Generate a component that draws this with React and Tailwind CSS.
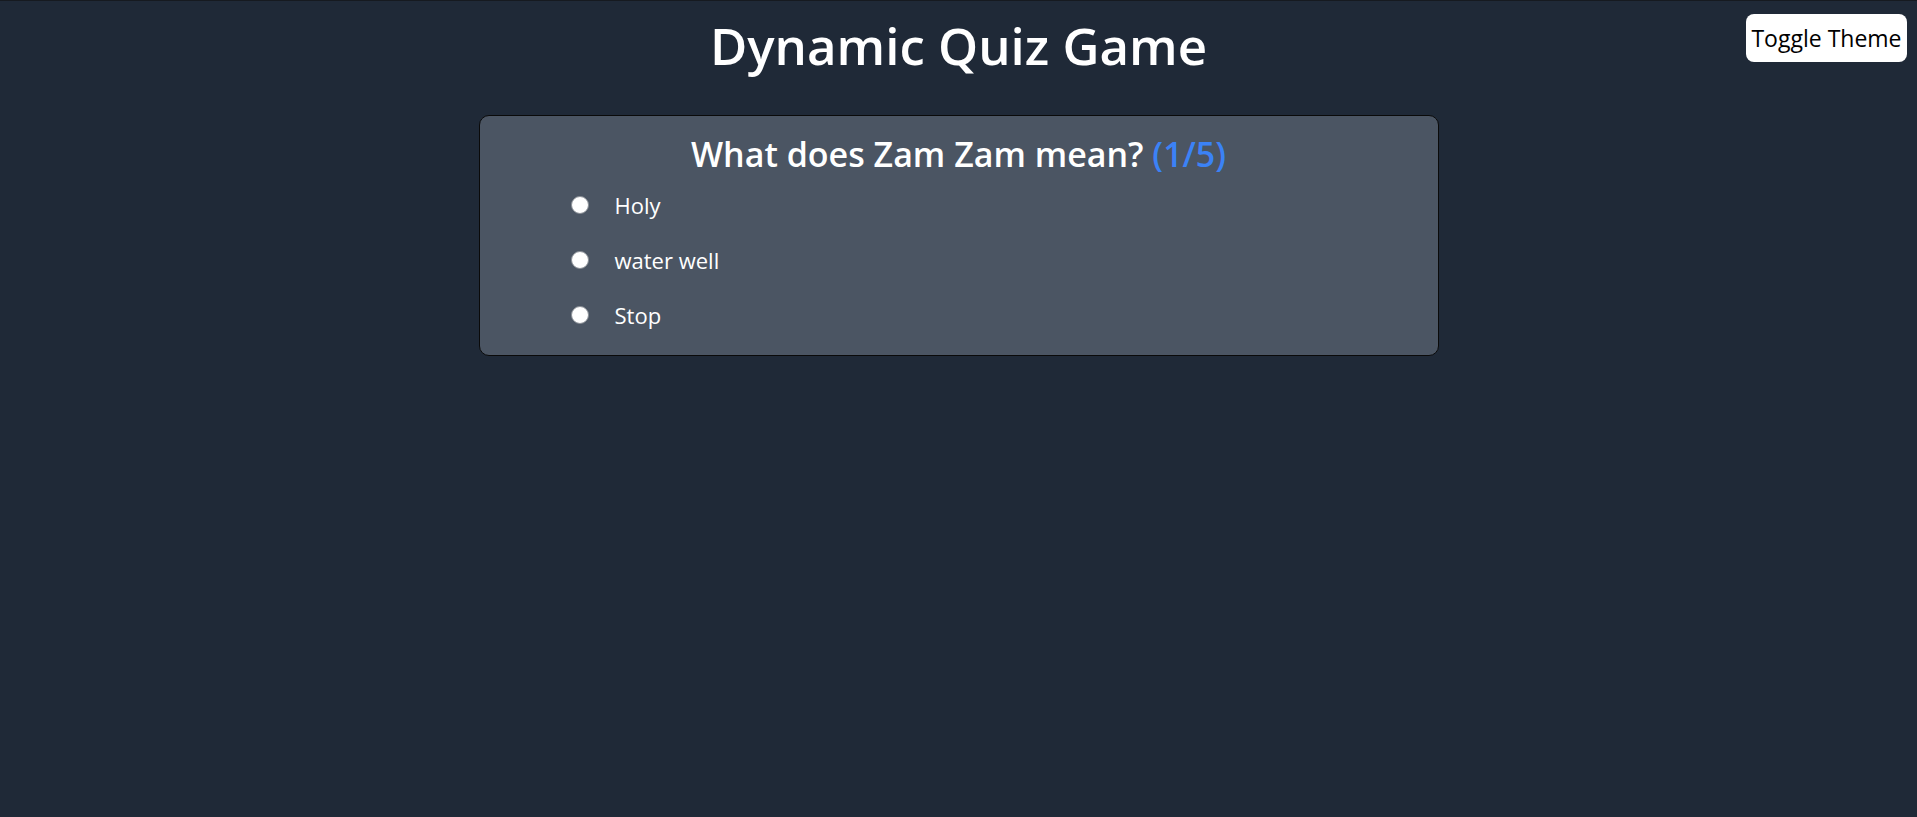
export default function App() {
  const options = ["Holy", "water well", "Stop"];
  return (
    <div className="relative min-h-screen bg-[#1f2937] border-t border-[#161a20] font-['Open_Sans',sans-serif] text-white">
      <button className="absolute top-[13px] right-[10px] w-[161px] h-[48px] rounded-lg bg-white text-black text-[23px] leading-none flex items-center justify-center">
        Toggle Theme
      </button>
      <h1 className="pt-[19px] text-center text-[51px] leading-none font-semibold">Dynamic Quiz Game</h1>
      <div className="mx-auto mt-[44px] w-[960px] rounded-[10px] border border-[#0a0a0a] bg-[#4b5563] pt-[18px] pb-[13px]">
        <h2 className="text-center text-[34px] leading-[40px] font-semibold">
          What does Zam Zam mean? <span className="text-[#3b82f6]">(1/5)</span>
        </h2>
        <div className="mt-[3px] flex flex-col pl-[91px]">
          {options.map((o) => (
            <label key={o} className="flex h-[55px] items-center">
              <span className="block h-[18px] w-[18px] rounded-full border border-[#8a8f96] bg-white" />
              <span className="ml-[26px] text-[22px] leading-[28px]">{o}</span>
            </label>
          ))}
        </div>
      </div>
    </div>
  );
}
